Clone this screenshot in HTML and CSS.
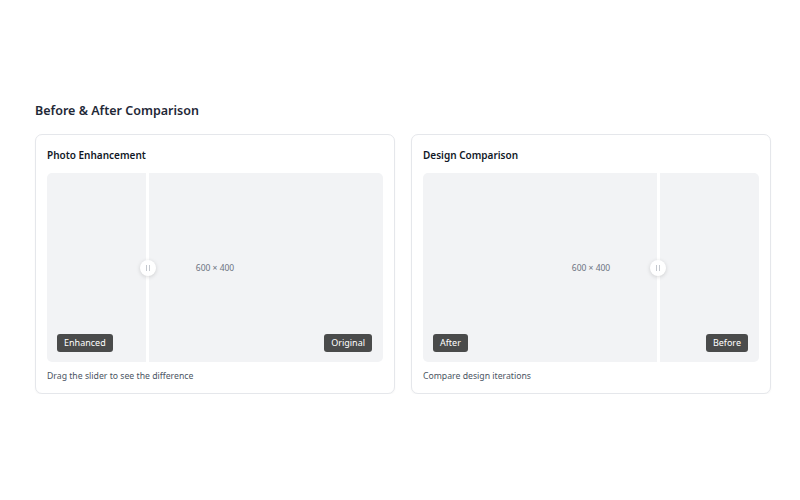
FILE: index.html
```html
<!DOCTYPE html>
<html>
<head>
<meta charset="utf-8">
<link rel="stylesheet" href="styles.css">
</head>
<body>
<main class="page">
  <h1 class="heading">Before &amp; After Comparison</h1>
  <div class="grid">
    <section class="card">
      <h2 class="card-title">Photo Enhancement</h2>
      <div class="compare">
        <span class="dims">600 × 400</span>
        <div class="divider" style="left: 30%"><span class="knob"><i></i><i></i></span></div>
        <span class="badge badge-left">Enhanced</span>
        <span class="badge badge-right">Original</span>
      </div>
      <p class="caption">Drag the slider to see the difference</p>
    </section>
    <section class="card">
      <h2 class="card-title">Design Comparison</h2>
      <div class="compare">
        <span class="dims">600 × 400</span>
        <div class="divider" style="left: 70%"><span class="knob"><i></i><i></i></span></div>
        <span class="badge badge-left">After</span>
        <span class="badge badge-right">Before</span>
      </div>
      <p class="caption">Compare design iterations</p>
    </section>
  </div>
</main>
</body>
</html>
```
FILE: styles.css
```css
* { box-sizing: border-box; }
html, body { margin: 0; background: #fff; }
body {
  font-family: "Noto Sans", "Open Sans", sans-serif;
  color: #1f2937;
}
.page {
  width: 736px;
  margin-left: 35px;
  padding-top: 100px;
}
.heading {
  margin: 0 0 12px;
  font-size: 12.5px;
  font-weight: 600;
  line-height: 22px;
  color: #1f2937;
}
.grid {
  display: grid;
  grid-template-columns: 1fr 1fr;
  gap: 16px;
}
.card {
  border: 1px solid #e5e7eb;
  border-radius: 7px;
  background: #fff;
  padding: 11px 11px 10px;
  box-shadow: 0 1px 2px rgba(0,0,0,0.04);
}
.card-title {
  margin: 0 0 9px;
  font-size: 10px;
  font-weight: 600;
  line-height: 18px;
  color: #111827;
}
.compare {
  position: relative;
  aspect-ratio: 16 / 9;
  background: #f2f3f5;
  border-radius: 5px;
  overflow: hidden;
  display: flex;
  align-items: center;
  justify-content: center;
}
.dims {
  font-size: 8.5px;
  color: #6b7280;
}
.divider {
  position: absolute;
  top: 0;
  bottom: 0;
  width: 3px;
  margin-left: -1.5px;
  background: #fff;
}
.knob {
  position: absolute;
  top: 50%;
  left: 50%;
  width: 16px;
  height: 16px;
  margin: -8px 0 0 -8px;
  border-radius: 50%;
  background: #fff;
  box-shadow: 0 1px 4px rgba(0,0,0,0.15);
  display: flex;
  align-items: center;
  justify-content: center;
  gap: 2px;
}
.knob i {
  display: block;
  width: 1px;
  height: 6px;
  background: #c4c8ce;
}
.badge {
  position: absolute;
  bottom: 10px;
  height: 18px;
  padding: 0 7px;
  border-radius: 3px;
  background: rgba(45,45,45,0.85);
  color: #fff;
  font-size: 9px;
  line-height: 18px;
}
.badge-left { left: 10px; }
.badge-right { right: 11px; }
.caption {
  margin: 7px 0 0;
  font-size: 8.7px;
  line-height: 14px;
  color: #4b5563;
}
```
